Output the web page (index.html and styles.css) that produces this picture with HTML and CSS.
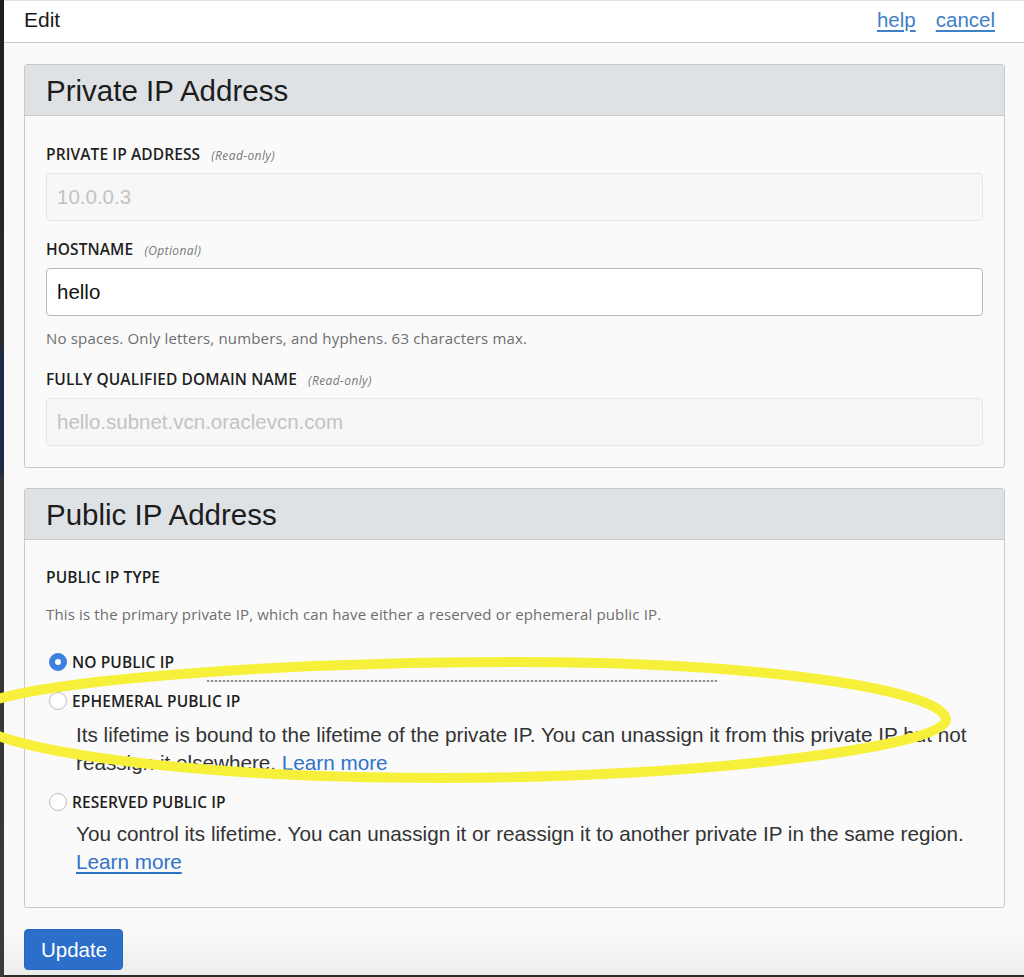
FILE: index.html
```html
<!DOCTYPE html>
<html lang="en">
<head>
<meta charset="utf-8">
<title>Edit</title>
<link rel="stylesheet" href="styles.css">
</head>
<body>
<div class="frame">
  <div class="edge"></div>
  <div class="window">
    <header class="topbar">
      <span class="title">Edit</span>
      <nav class="links"><a href="#">help</a><a href="#">cancel</a></nav>
    </header>
    <main class="content">
      <section class="panel">
        <div class="panel-head"><h2>Private IP Address</h2></div>
        <div class="panel-body">
          <div class="label">PRIVATE IP ADDRESS <em>(Read-only)</em></div>
          <div class="input readonly">10.0.0.3</div>
          <div class="label gap">HOSTNAME <em>(Optional)</em></div>
          <div class="input">hello</div>
          <div class="help">No spaces. Only letters, numbers, and hyphens. 63 characters max.</div>
          <div class="label gap2">FULLY QUALIFIED DOMAIN NAME <em>(Read-only)</em></div>
          <div class="input readonly">hello.subnet.vcn.oraclevcn.com</div>
        </div>
      </section>
      <section class="panel panel2">
        <div class="panel-head"><h2>Public IP Address</h2></div>
        <div class="panel-body">
          <div class="label">PUBLIC IP TYPE</div>
          <div class="help help2">This is the primary private IP, which can have either a reserved or ephemeral public IP.</div>
          <div class="radio-row first"><span class="radio checked"></span><span class="rlabel">NO PUBLIC IP</span></div>
          <div class="radio-row second"><span class="radio"></span><span class="rlabel">EPHEMERAL PUBLIC IP</span></div>
          <p class="desc">Its lifetime is bound to the lifetime of the private IP. You can unassign it from this private IP but not reassign it elsewhere. <a href="#">Learn more</a></p>
          <div class="radio-row third"><span class="radio"></span><span class="rlabel">RESERVED PUBLIC IP</span></div>
          <p class="desc last">You control its lifetime. You can unassign it or reassign it to another private IP in the same region. <a href="#">Learn more</a></p>
          <div class="dots"></div>
        </div>
      </section>
      <button class="btn" type="button">Update</button>
    </main>
  </div>
  <svg class="marker" width="1024" height="977" viewBox="0 0 1024 977" aria-hidden="true">
    <path d="M -30 715 C -30 685, 250 662, 520 662 C 760 662, 946 690, 946 720 C 946 745, 720 777, 440 778 C 180 778, -30 748, -30 715 Z" fill="none" stroke="#f6f03a" stroke-width="10"/>
  </svg>
</div>
</body>
</html>
```

FILE: styles.css
```css
* { box-sizing: border-box; }
html, body { margin: 0; padding: 0; }
body {
  background: #f9f9f9;
  font-family: "Liberation Sans", Arial, sans-serif;
  color: #222;
}
.frame {
  position: relative;
  display: flex;
  width: 1024px;
  height: 977px;
  overflow: hidden;
}
.edge {
  width: 4px;
  flex: none;
  background: linear-gradient(#1e1e1e 0, #2b2b2b 340px, #1b2a4a 360px, #1b2a4a 470px, #333 480px, #3a3a3a 100%);
}
.window {
  flex: 1;
  display: flex;
  flex-direction: column;
  background: linear-gradient(#f9f9f9 0, #f9f9f9 930px, #ededed 974px);
  border-bottom: 2px solid #2a2a2a;
}
.topbar {
  height: 43px;
  flex: none;
  display: flex;
  align-items: center;
  justify-content: space-between;
  padding: 0 29px 4px 20px;
  background: #fff;
  border-top: 1px solid #e2e2e2;
  border-bottom: 1px solid #c9c9c9;
}
.title { font-size: 21px; color: #1a1a1a; }
.links { display: flex; gap: 20px; }
.links a { font-size: 20.5px; color: #3f80c6; text-decoration: underline; text-underline-offset: 3px; }
.content {
  padding: 21px 19px 0 20px;
  display: flex;
  flex-direction: column;
  align-items: flex-start;
}
.panel {
  width: 100%;
  border: 1px solid #c6c8ca;
  border-radius: 3px;
  background: #fafafa;
}
.panel2 { margin-top: 20px; position: relative; }
.panel-head {
  height: 51px;
  background: #dfe2e5;
  border-bottom: 1px solid #c6c8ca;
  border-radius: 3px 3px 0 0;
  display: flex;
  align-items: center;
  padding: 0 21px;
}
.panel-head h2 {
  margin: 0;
  font-weight: normal;
  font-size: 29.5px;
  color: #1c1c1c;
  padding-top: 2px;
}
.panel-body {
  padding: 28px 21px 21px;
}
.panel2 .panel-body { padding-top: 27px; }
.label {
  height: 20px;
  line-height: 20px;
  font-family: "Open Sans", "Liberation Sans", sans-serif;
  font-weight: 600;
  font-size: 15.5px;
  letter-spacing: 0.1px;
  color: #1f1f1f;
  margin-bottom: 9px;
}
.label em {
  font-weight: normal;
  font-size: 12px;
  color: #777;
  margin-left: 7px;
  letter-spacing: 0.4px;
}
.gap { margin-top: 18px; }
.gap2 { margin-top: 21px; }
.input {
  height: 48px;
  border: 1px solid #b9b9b9;
  border-radius: 4px;
  background: #fff;
  padding: 0 10px;
  display: flex;
  align-items: center;
  font-size: 20.5px;
  color: #111;
}
.input.readonly {
  background: #f7f7f7;
  border-color: #e6e6e6;
  color: #c3c3c3;
}
.help {
  height: 20px;
  line-height: 20px;
  margin-top: 12px;
  font-family: "Open Sans", "Liberation Sans", sans-serif;
  font-size: 15px;
  letter-spacing: 0.18px;
  color: #6e6e6e;
}
.help2 { margin-top: 17px; letter-spacing: 0.15px; }
.radio-row {
  height: 20px;
  display: flex;
  align-items: center;
  padding-left: 3px;
}
.radio-row.first { margin-top: 28px; }
.radio-row.second { margin-top: 19px; }
.radio-row.third { margin-top: 15px; }
.radio {
  width: 18px;
  height: 18px;
  border-radius: 50%;
  border: 1px solid #bdbdbd;
  background: #fff;
  flex: none;
  display: flex;
  align-items: center;
  justify-content: center;
}
.radio.checked {
  background: #3d80e0;
  border-color: #3d80e0;
}
.radio.checked::after {
  content: "";
  width: 6px;
  height: 6px;
  border-radius: 50%;
  background: #fff;
}
.rlabel {
  margin-left: 5px;
  font-family: "Open Sans", "Liberation Sans", sans-serif;
  font-weight: 600;
  font-size: 15.5px;
  letter-spacing: 0.1px;
  color: #1f1f1f;
}
.desc {
  margin: 10px 0 0 30px;
  font-size: 20.7px;
  line-height: 28px;
  color: #333;
}
.radio-row.third + .desc { margin-top: 8px; }
.desc a { color: #2f73c8; text-decoration: underline; text-underline-offset: 3px; }
.desc.last { margin-bottom: 10px; }
.dots {
  position: absolute;
  left: 182px;
  top: 191px;
  width: 510px;
  height: 2px;
  background: repeating-linear-gradient(90deg, #777 0 2px, #ddd 2px 4px);
  opacity: 0.8;
}
.btn {
  margin-top: 21px;
  height: 41px;
  padding: 0 15px 0 16px;
  border: 1px solid #2567bf;
  border-radius: 4px;
  background: #2b6fca;
  color: #fff;
  font-family: "Liberation Sans", Arial, sans-serif;
  font-size: 20.5px;
}
.marker {
  position: absolute;
  left: 0;
  top: 0;
  pointer-events: none;
}
```
